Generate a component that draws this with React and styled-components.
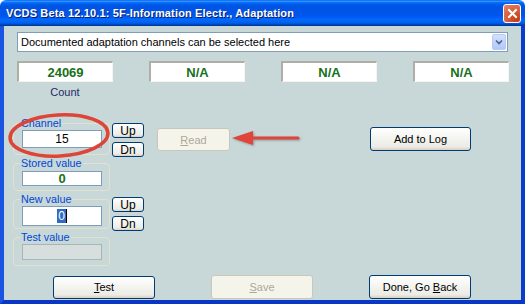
import React from 'react';
import styled, { createGlobalStyle } from 'styled-components';

const Global = createGlobalStyle`
  html, body { margin: 0; padding: 0; background: #ffffff; }
  body { font-family: "Liberation Sans", Arial, sans-serif; }
  #root { width: 525px; height: 304px; }
`;

const Window = styled.div`
  position: relative;
  width: 525px;
  height: 304px;
  display: flex;
  flex-direction: column;
  overflow: hidden;
`;

const TitleBar = styled.div`
  height: 26px;
  flex: none;
  display: flex;
  align-items: center;
  justify-content: space-between;
  padding: 0 4px 0 6px;
  border-radius: 6px 6px 0 0;
  background: linear-gradient(to bottom, #0058ee 0%, #3593ff 4%, #288eff 6%, #127dff 8%, #036ffc 10%, #0262ee 14%, #0057e5 20%, #0054e3 24%, #0055eb 56%, #005bf5 66%, #026afe 76%, #0062ef 86%, #0052d6 92%, #0040ab 96%, #003092 100%);
`;

const TitleText = styled.span`
  color: #ffffff;
  font-weight: bold;
  font-size: 11px;
  letter-spacing: 0.15px;
  text-shadow: 1px 1px 0 #0a1e6e;
  white-space: pre;
`;

const CloseButton = styled.div`
  width: 18px;
  height: 19px;
  box-sizing: border-box;
  border: 1px solid #ffffff;
  border-radius: 3px;
  background: radial-gradient(circle at 80% 85%, #c23d14 0%, #d85a36 45%, #e5866a 100%);
  display: flex;
  align-items: center;
  justify-content: center;
`;

const Frame = styled.div`
  flex: 1;
  display: flex;
  border-style: solid;
  border-width: 0 4px 4px 4px;
  border-color: #0b40d4 #0a3ccc #0936c4 #1a55e2;
`;

const Content = styled.div`
  flex: 1;
  display: flex;
  flex-direction: column;
  background: #c8d8d8;
  padding: 6px 0 1px 0;
`;

const Select = styled.div`
  margin: 0 13px;
  height: 20px;
  box-sizing: border-box;
  border: 1px solid #7f9db9;
  background: #ffffff;
  display: flex;
  align-items: center;
`;

const SelectText = styled.span`
  flex: 1;
  padding-left: 3px;
  font-size: 11px;
  color: #000000;
`;

const SelectArrow = styled.div`
  width: 14px;
  height: 16px;
  margin-right: 1px;
  box-sizing: border-box;
  border: 1px solid #b7c9f4;
  border-radius: 2px;
  background: linear-gradient(to bottom, #d2e0fd, #b3c8f7);
  display: flex;
  align-items: center;
  justify-content: center;
`;

const ValuesRow = styled.div`
  margin: 9px 0 0 13px;
  display: grid;
  grid-template-columns: repeat(4, 96px);
  column-gap: 36px;
`;

const ValueBox = styled.div`
  height: 21px;
  box-sizing: border-box;
  border-style: solid;
  border-width: 2px 1px 1px 2px;
  border-color: #aeaea6 #f4f4f0 #f4f4f0 #aeaea6;
  background: #ffffff;
  display: flex;
  align-items: center;
  justify-content: center;
  font-size: 13px;
  font-weight: bold;
  color: #18701a;
`;

const CountLabel = styled.div`
  margin: 4px 0 0 13px;
  width: 96px;
  text-align: center;
  font-size: 11px;
  line-height: 13px;
  color: #22296a;
`;

const MainArea = styled.div`
  margin-top: 18px;
  padding-left: 9px;
  display: flex;
  align-items: flex-start;
`;

const GroupColumn = styled.div`
  display: flex;
  flex-direction: column;
`;

const GroupRow = styled.div`
  display: flex;
  align-items: flex-start;
  gap: 2px;
  margin-bottom: ${p => p.$mb || 0}px;
`;

const Group = styled.fieldset`
  width: 97px;
  box-sizing: border-box;
  margin: 0;
  padding: ${p => p.$pt || 0}px 7px ${p => p.$pb}px 6px;
  border-width: 1px;
  border-style: solid;
  border-color: #e4e0cf;
  border-radius: 4px;
  min-width: 0;
`;

const Legend = styled.legend`
  padding: 0 1px;
  font-size: 10.8px;
  line-height: 13px;
  color: #0046d5;
`;

const Field = styled.div`
  margin-left: 2px;
  width: 80px;
  height: ${p => p.$h}px;
  box-sizing: border-box;
  border: 1px solid ${p => (p.$disabled ? '#a9b5b4' : '#7f9db9')};
  background: ${p => (p.$disabled ? '#d6dfde' : '#ffffff')};
  display: flex;
  align-items: center;
  justify-content: center;
  font-size: ${p => (p.$bold ? 13 : 12)}px;
  font-weight: ${p => (p.$bold ? 'bold' : 'normal')};
  color: ${p => (p.$bold ? '#18701a' : '#000000')};
`;

const Selected = styled.span`
  background: #316ac5;
  color: #ffffff;
  font-size: 12px;
  line-height: 14px;
  padding: 0 1px;
  border-right: 1px solid #000000;
`;

const StepStack = styled.div`
  margin-top: ${p => p.$mt}px;
  display: flex;
  flex-direction: column;
  gap: 4px;
`;

const Button = styled.button`
  box-sizing: border-box;
  width: ${p => p.$w}px;
  height: ${p => p.$h}px;
  margin: ${p => p.$m || 0};
  padding: 0;
  border: 1px solid ${p => (p.disabled ? '#c9c7ba' : '#003c74')};
  border-radius: 3px;
  background: ${p => (p.disabled ? '#f5f4ea' : 'linear-gradient(to bottom, #ffffff 0%, #f3f3ef 50%, #ecebe6 85%, #d6d0c5 100%)')};
  color: ${p => (p.disabled ? '#aca899' : '#000000')};
  font-family: "Liberation Sans", Arial, sans-serif;
  font-size: ${p => p.$fs || 11}px;
  display: flex;
  align-items: center;
  justify-content: center;
  flex: none;
`;

const Key = styled.span`
  text-decoration: underline;
`;

const BottomRow = styled.div`
  margin-top: auto;
  padding-left: 49px;
  display: grid;
  grid-template-columns: 102px 102px 102px;
  column-gap: 56px;
  align-items: center;
`;

const Annotation = styled.svg`
  position: absolute;
  overflow: visible;
  pointer-events: none;
`;

export default function App() {
  return (
    <>
      <Global />
      <Window>
        <TitleBar>
          <TitleText>VCDS Beta 12.10.1: 5F-Information Electr., Adaptation</TitleText>
          <CloseButton>
            <svg width="11" height="11" viewBox="0 0 11 11">
              <path d="M2 2 L9 9 M9 2 L2 9" stroke="#ffffff" strokeWidth="2" strokeLinecap="square" />
            </svg>
          </CloseButton>
        </TitleBar>
        <Frame>
          <Content>
            <Select>
              <SelectText>Documented adaptation channels can be selected here</SelectText>
              <SelectArrow>
                <svg width="8" height="6" viewBox="0 0 8 6">
                  <path d="M1 1.5 L4 4.5 L7 1.5" stroke="#4d6185" strokeWidth="1.6" fill="none" />
                </svg>
              </SelectArrow>
            </Select>
            <ValuesRow>
              <ValueBox>24069</ValueBox>
              <ValueBox>N/A</ValueBox>
              <ValueBox>N/A</ValueBox>
              <ValueBox>N/A</ValueBox>
            </ValuesRow>
            <CountLabel>Count</CountLabel>
            <MainArea>
              <GroupColumn>
                <GroupRow>
                  <Group $pb={6}>
                    <Legend>Channel</Legend>
                    <Field $h={18}>15</Field>
                  </Group>
                  <StepStack $mt={6}>
                    <Button $w={32} $h={15} $fs={12}>Up</Button>
                    <Button $w={32} $h={15} $fs={12}>Dn</Button>
                  </StepStack>
                </GroupRow>
                <GroupRow $mb={2}>
                  <Group $pt={1} $pb={4}>
                    <Legend>Stored value</Legend>
                    <Field $h={15} $bold>0</Field>
                  </Group>
                </GroupRow>
                <GroupRow>
                  <Group $pb={2}>
                    <Legend>New value</Legend>
                    <Field $h={20}><Selected>0</Selected></Field>
                  </Group>
                  <StepStack $mt={4}>
                    <Button $w={32} $h={15} $fs={12}>Up</Button>
                    <Button $w={32} $h={15} $fs={12}>Dn</Button>
                  </StepStack>
                </GroupRow>
                <GroupRow>
                  <Group $pb={5}>
                    <Legend>Test value</Legend>
                    <Field $h={16} $disabled />
                  </Group>
                </GroupRow>
              </GroupColumn>
              <Button $w={73} $h={23} $m="11px 0 0 13px" disabled>
                <span><Key>R</Key>ead</span>
              </Button>
              <Button $w={101} $h={24} $m="10px 0 0 140px">Add to Log</Button>
            </MainArea>
            <BottomRow>
              <Button $w={102} $h={23}><span><Key>T</Key>est</span></Button>
              <Button $w={102} $h={24} disabled><span><Key>S</Key>ave</span></Button>
              <Button $w={102} $h={24}><span>Done, Go <Key>B</Key>ack</span></Button>
            </BottomRow>
          </Content>
        </Frame>
        <Annotation style={{ left: 4, top: 110 }} width="112" height="52" viewBox="0 0 112 52">
          <ellipse cx="55" cy="25.5" rx="49" ry="20.5" transform="rotate(-3 55 25.5)" fill="none" stroke="#dc4538" strokeWidth="3.5" />
        </Annotation>
        <Annotation style={{ left: 228, top: 128, filter: 'drop-shadow(1px 1px 1px rgba(0,0,0,0.3))' }} width="74" height="20" viewBox="0 0 74 20">
          <path d="M22 10 L70 10" stroke="#e0443a" strokeWidth="3" strokeLinecap="round" />
          <path d="M4 10 L25 3 L25 17 Z" fill="#e0443a" />
        </Annotation>
      </Window>
    </>
  );
}
